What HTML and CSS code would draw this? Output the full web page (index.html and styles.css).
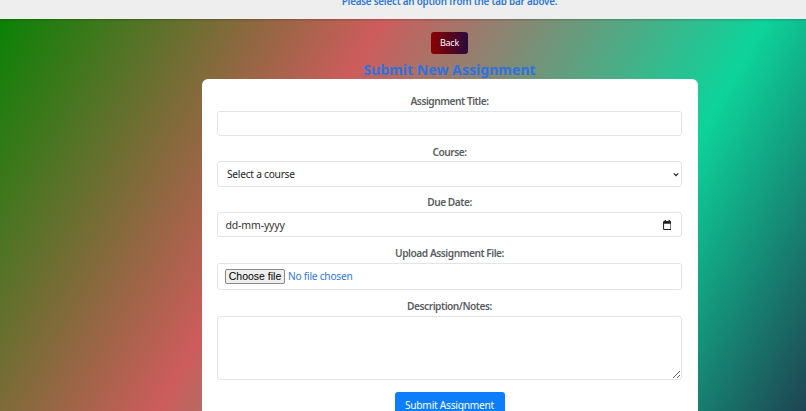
FILE: index.html
```html
<!DOCTYPE html>
<html lang="en">
<head>
<meta charset="utf-8">
<title>Submit New Assignment</title>
<link rel="stylesheet" href="styles.css">
</head>
<body>
<header class="tabbar"><p class="tabbar-msg">Please select an option from the tab bar above.</p></header>
<main class="stage">
  <button class="back" type="button">Back</button>
  <h1 class="title">Submit New Assignment</h1>
  <form class="card">
    <div class="group">
      <label class="label" for="t">Assignment Title:</label>
      <input class="control" id="t" type="text">
    </div>
    <div class="group">
      <label class="label" for="c">Course:</label>
      <div class="selectwrap">
        <select class="control select" id="c"><option>Select a course</option></select>
        <svg class="chev" viewBox="0 0 8 6" width="6" height="5" aria-hidden="true"><path fill="none" stroke="#222" stroke-width="1.7" d="M1 1.5l3 3 3-3"/></svg>
      </div>
    </div>
    <div class="group">
      <span class="label">Due Date:</span>
      <div class="control date">
        <span>dd-mm-yyyy</span>
        <svg class="cal" viewBox="0 0 16 19" width="8.5" height="10" aria-hidden="true"><path fill="#222" d="M3 0h2.500v2h5V0H13v2h1a2 2 0 0 1 2 2v13a2 2 0 0 1-2 2H2a2 2 0 0 1-2-2V4a2 2 0 0 1 2-2h1V0zM2 7v10h12V7H2z"/></svg>
      </div>
    </div>
    <div class="group file-group">
      <span class="label">Upload Assignment File:</span>
      <div class="control filewrap">
        <button class="filebtn" type="button">Choose file</button>
        <span class="filename">No file chosen</span>
      </div>
    </div>
    <div class="group">
      <label class="label" for="d">Description/Notes:</label>
      <textarea class="control area" id="d"></textarea>
    </div>
    <div class="actions"><button class="submit" type="button">Submit Assignment</button></div>
  </form>
</main>
</body>
</html>
```

FILE: styles.css
```css
* { box-sizing: border-box; }
html, body { margin: 0; height: 411px; overflow: hidden; }
body { font-family: "Noto Sans", sans-serif; font-size: 10.2px; display: flex; flex-direction: column; }
.tabbar { height: 19px; flex: none; background: #eeeeee; display: flex; align-items: flex-end; justify-content: center; overflow: hidden; padding-left: 93px; box-shadow: 0 1px 2px rgba(0,0,0,.2); position: relative; z-index: 1; }
.tabbar-msg { margin: 0 0 10px; font-size: 9.8px; line-height: 14px; font-weight: 600; letter-spacing: -.2px; color: #2f78d8; white-space: nowrap; }
.stage { flex: 1; min-height: 0; overflow: hidden; display: flex; flex-direction: column; align-items: center; background: linear-gradient(120deg, #0a8205 0%, #cd5c5c 33.5%, #0dd39a 67%, #1f3f50 91%) no-repeat; background-size: 100% 584px; padding: 13px 0 0 93px; }
.back { width: 37px; height: 22px; flex: none; padding: 0; border: 0; border-radius: 3px; background: linear-gradient(90deg, #8b0000, #2a0a3c); color: #fff; font: 9px/22px "Noto Sans", sans-serif; letter-spacing: -.2px; }
.title { margin: 6px 0 0; font-size: 14.1px; line-height: 19px; font-weight: 700; color: #2e72e0; white-space: nowrap; flex: none; }
.card { width: 496px; flex: none; background: #fff; border-radius: 6px; padding: 15px 15.5px 0; display: flex; flex-direction: column; }
.group { display: flex; flex-direction: column; margin-bottom: 8.5px; }
.file-group { margin-bottom: 9.5px; }
.label { display: block; text-align: center; font-weight: 600; color: #5a5e62; line-height: 15px; margin-bottom: 1.5px; letter-spacing: -.48px; }
.control { display: block; width: 100%; height: 25.5px; border: 1px solid #e2e5e8; border-radius: 3px; background: #fff; font: 10.2px "Noto Sans", sans-serif; letter-spacing: -.25px; color: #212529; }
.selectwrap { position: relative; }
.select { appearance: none; padding: 0 4px 0 9px; }
.chev { position: absolute; right: 3px; top: 11px; }
.date { display: flex; align-items: center; justify-content: space-between; padding: 1px 10px 0 7.5px; font-size: 10.5px; letter-spacing: -.15px; color: #333; margin-bottom: .5px; }
.cal { display: block; }
.filewrap { display: flex; align-items: center; padding: 0 7px; height: 27px; }
.filebtn { font: 10.5px "Liberation Sans", sans-serif; letter-spacing: 0; height: 15px; width: 60px; padding: 0; margin-right: 3px; background: #efefef; border: 1px solid #8a8a8a; border-radius: 2px; color: #000; }
.filename { color: #2f78d8; }
.area { height: 64px; resize: vertical; }
.actions { display: flex; justify-content: center; margin-top: 3.5px; }
.submit { width: 110px; height: 28px; flex: none; padding: 0; border: 0; border-radius: 3px; background: #0d7efb; color: #fff; font: 10.2px/27px "Noto Sans", sans-serif; letter-spacing: -.25px; }
```
